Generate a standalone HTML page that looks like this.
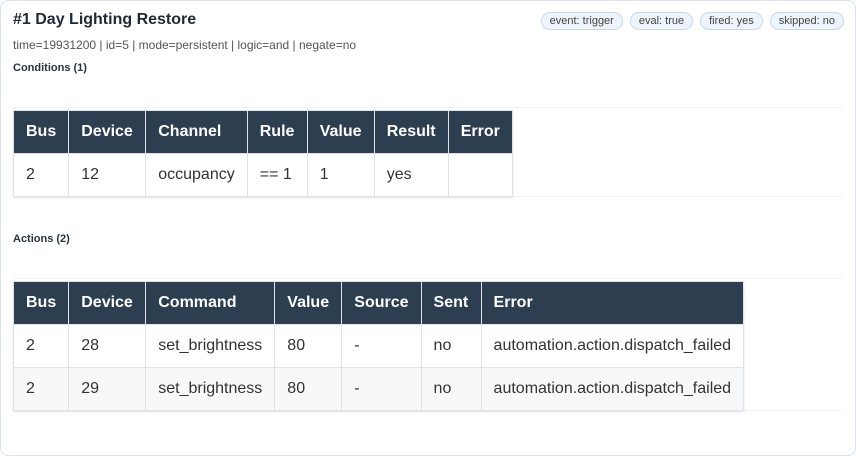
<!DOCTYPE html>
<html><head><style>
*{box-sizing:border-box;margin:0;padding:0}
body{width:856px;height:456px;background:#fff;font-family:"Liberation Sans",Arial,sans-serif;position:relative;overflow:hidden}
.card{position:absolute;left:0;top:0;width:856px;height:456px;border:1px solid #d9e2ec;border-radius:8px}
.t{position:absolute;left:13px;top:11px;font-size:16px;font-weight:bold;color:#1f2a36}
.m{position:absolute;left:13px;top:38px;font-size:12px;color:#555}
.h{position:absolute;left:13px;font-size:11px;font-weight:bold;color:#2a3440}
.badges{position:absolute;top:12px;right:12px;display:flex;gap:7px}
.b{height:18px;line-height:16px;padding:0 8px;border:1px solid #c9d9ea;background:#eef4fb;border-radius:9px;font-size:11px;color:#444}
.line{position:absolute;left:13px;width:830px;height:1px;background:#f1f3f5}
table{position:absolute;left:13px;border-collapse:collapse;font-size:16px;color:#333;box-shadow:0 1px 2px rgba(0,0,0,.12)}
th{background:#2c3e50;color:#fff;font-weight:bold;text-align:left;height:43px;padding:0 12px;border:1px solid #dfe3e8}
td{height:43px;padding:0 12px;border:1px solid #dfe3e8;background:#fff}
tr.alt td{background:#f7f8fa}
</style></head><body>
<div class="card"></div>
<div class="t">#1 Day Lighting Restore</div>
<div class="badges"><div class="b">event: trigger</div><div class="b">eval: true</div><div class="b">fired: yes</div><div class="b">skipped: no</div></div>
<div class="m">time=19931200 | id=5 | mode=persistent | logic=and | negate=no</div>
<div class="h" style="top:62px">Conditions (1)</div>
<div class="line" style="top:107px"></div>
<div class="line" style="top:196px"></div>
<table style="top:110px">
<tr><th style="width:55px">Bus</th><th style="width:77px">Device</th><th style="width:101px">Channel</th><th style="width:60px">Rule</th><th style="width:67px">Value</th><th style="width:74px">Result</th><th style="width:63px">Error</th></tr>
<tr><td>2</td><td>12</td><td>occupancy</td><td>== 1</td><td>1</td><td>yes</td><td></td></tr>
</table>
<div class="h" style="top:233px">Actions (2)</div>
<div class="line" style="top:278px"></div>
<div class="line" style="top:410px"></div>
<table style="top:281px">
<tr><th style="width:55px">Bus</th><th style="width:77px">Device</th><th style="width:129px">Command</th><th style="width:67px">Value</th><th style="width:79px">Source</th><th style="width:60px">Sent</th><th style="width:261px">Error</th></tr>
<tr><td>2</td><td>28</td><td>set_brightness</td><td>80</td><td>-</td><td>no</td><td>automation.action.dispatch_failed</td></tr>
<tr class="alt"><td>2</td><td>29</td><td>set_brightness</td><td>80</td><td>-</td><td>no</td><td>automation.action.dispatch_failed</td></tr>
</table>
</body></html>
